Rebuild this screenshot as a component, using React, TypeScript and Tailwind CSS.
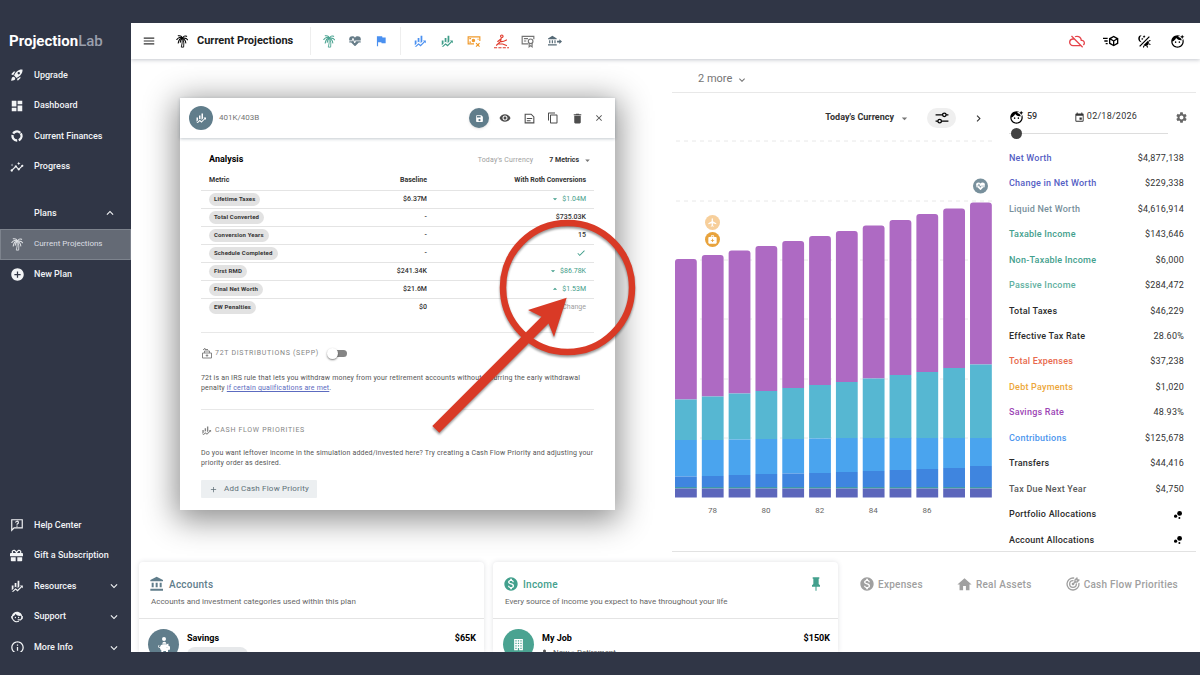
import type { ReactNode } from "react";
import { FaGift, FaPiggyBank } from "react-icons/fa";
import {
  MdAdd,
  MdAddCircle,
  MdArrowDropDown,
  MdArrowDropUp,
  MdBubbleChart,
  MdCheck,
  MdClose,
  MdContentCopy,
  MdDelete,
  MdEvent,
  MdExpandLess,
  MdExpandMore,
  MdChevronRight,
  MdFaceRetouchingNatural,
  MdFlight,
  MdHome,
  MdInfoOutline,
  MdInsights,
  MdMedicalServices,
  MdMonetizationOn,
  MdOutlineCloudOff,
  MdRocketLaunch,
  MdSave,
  MdSettings,
  MdVisibility,
} from "react-icons/md";
import { TbTargetArrow } from "react-icons/tb";

const PATHS = {
  menu: "M3,6H21V8H3V6M3,11H21V13H3V11M3,16H21V18H3V16Z",
  dashboard: "M13,3V9H21V3M13,21H21V11H13M3,21H11V15H3M3,13H11V3H3V13Z",
  finance:
    "M6,16.5L3,19.44V11H6M11,14.66L9.43,13.32L8,14.64V7H11M16,13L13,16V3H16M18.81,12.81L17,11H22V16L20.21,14.21L13,21.36L9.53,18.34L5.75,22H3L9.47,15.66L13,18.64",
  heart:
    "M7.5,4A5.5,5.5 0 0,0 2,9.5C2,10 2.09,10.5 2.22,11H6.3L7.57,7.63C7.87,6.83 9.05,6.75 9.43,7.63L11.5,13L12.09,11.58C12.22,11.25 12.57,11 13,11H21.78C21.91,10.5 22,10 22,9.5A5.5,5.5 0 0,0 16.5,4C14.64,4 13,4.93 12,6.34C11,4.93 9.36,4 7.5,4V4M3,12.5A1,1 0 0,0 2,13.5A1,1 0 0,0 3,14.5H5.44L11,20C12,20.9 12,20.9 13,20L18.56,14.5H21A1,1 0 0,0 22,13.5A1,1 0 0,0 21,12.5H13.4L12.47,14.8C12.07,15.81 10.92,15.67 10.55,14.83L8.5,9.5L7.54,11.83C7.39,12.21 7.05,12.5 6.6,12.5H3Z",
  flag: "M14.4,6L14,4H5V21H7V14H12.6L13,16H20V6H14.4Z",
  agent:
    "M18.72,14.76C19.07,13.91 19.26,13 19.26,12C19.26,11.28 19.15,10.59 18.96,9.95C18.31,10.1 17.63,10.18 16.92,10.18C13.86,10.18 11.15,8.67 9.5,6.34C8.61,8.5 6.91,10.26 4.77,11.22C4.73,11.47 4.73,11.74 4.73,12A7.27,7.27 0 0,0 12,19.27C13.05,19.27 14.06,19.04 14.97,18.63C15.54,19.72 15.8,20.26 15.78,20.26C14.14,20.81 12.87,21.08 12,21.08C9.58,21.08 7.27,20.13 5.57,18.42C4.53,17.38 3.76,16.11 3.33,14.73H2V10.18H3.09C3.93,6.04 7.6,2.92 12,2.92C14.4,2.92 16.71,3.87 18.42,5.58C19.69,6.84 20.54,8.45 20.89,10.18H22V14.67H22V14.69L22,14.73H21.94L18.38,18L13.08,17.4V15.73H17.91L18.72,14.76M9.27,11.77C9.57,11.77 9.86,11.89 10.07,12.11C10.28,12.32 10.4,12.61 10.4,12.91C10.4,13.21 10.28,13.5 10.07,13.71C9.86,13.92 9.57,14.04 9.27,14.04C8.64,14.04 8.13,13.54 8.13,12.91C8.13,12.28 8.64,11.77 9.27,11.77M14.72,11.77C15.35,11.77 15.85,12.28 15.85,12.91C15.85,13.54 15.35,14.04 14.72,14.04C14.09,14.04 13.58,13.54 13.58,12.91A1.14,1.14 0 0,1 14.72,11.77Z",
  bank: "M11.5,1L2,6V8H21V6M16,10V17H19V10M2,22H21V19H2M10,10V17H13V10M4,10V17H7V10H4Z",
  pin: "M16,12V4H17V2H7V4H8V12L6,14V16H11.2V22H12.8V16H18V14L16,12Z",
  cube: "M16,4L9,8.04V15.96L16,20L23,15.96V8.04M16,6.31L19.8,8.5L16,10.69L12.21,8.5M0,7V9H7V7M11,10.11L15,12.42V17.11L11,14.81M21,10.11V14.81L17,17.11V12.42M2,11V13H7V11M4,15V17H7V15",
  theme:
    "M7.5,2C5.71,3.15 4.5,5.18 4.5,7.5C4.5,9.82 5.71,11.85 7.53,13C4.46,13 2,10.54 2,7.5A5.5,5.5 0 0,1 7.5,2M19.07,3.5L20.5,4.93L4.93,20.5L3.5,19.07L19.07,3.5M12.89,5.93L11.41,5L9.97,6L10.39,4.3L9,3.24L10.75,3.12L11.33,1.47L12,3.1L13.73,3.13L12.38,4.26L12.89,5.93M9.59,9.54L8.43,8.81L7.31,9.59L7.65,8.27L6.56,7.44L7.92,7.35L8.37,6.06L8.88,7.33L10.24,7.36L9.19,8.23L9.59,9.54M19,13.5A5.5,5.5 0 0,1 13.5,19C12.28,19 11.15,18.6 10.24,17.93L17.93,10.24C18.6,11.15 19,12.28 19,13.5M14.6,20.08L17.37,18.93L17.13,22.28L14.6,20.08M18.93,17.38L20.08,14.61L22.28,17.15L18.93,17.38M20.08,12.42L18.94,9.64L22.28,9.88L20.08,12.42M9.63,18.93L12.4,20.08L9.87,22.27L9.63,18.93Z",
  building:
    "M5,3V21H11V17.5H13V21H19V3H5M7,5H9V7H7V5M11,5H13V7H11V5M15,5H17V7H15V5M7,9H9V11H7V9M11,9H13V11H11V9M15,9H17V11H15V9M7,13H9V15H7V13M11,13H13V15H11V13M15,13H17V15H15V13M7,17H9V19H7V17M15,17H17V19H15V17Z",
};

function Icon({ d, size = 14 }: { d: string; size?: number }) {
  return (
    <svg width={size} height={size} viewBox="0 0 24 24" fill="currentColor" fillRule="evenodd" aria-hidden="true">
      <path d={d} />
    </svg>
  );
}

function Line({ children, size = 14, w = 2 }: { children: ReactNode; size?: number; w?: number }) {
  return (
    <svg width={size} height={size} viewBox="0 0 24 24" fill="none" stroke="currentColor" strokeWidth={w} aria-hidden="true">
      {children}
    </svg>
  );
}

const Palm = () => (
  <Line w={1.8}>
    <path
      d="M12.500 7.500Q8 3.500 3 9.500M12.500 7.500Q7 7 5.500 15.500M12.500 7.500Q11.500 2 5.500 3M12.500 7.500Q15.500 1.500 20 4M12.500 7.500Q19 6 21.500 10M13 8Q18 9 18.500 15.500M12.500 8Q9 10 9 14"
      strokeLinecap="round"
    />
    <path d="M12.200 8.500Q13 15 10.800 22.500H14.800Q16 15 13.800 9" strokeWidth="1.500" />
  </Line>
);

const Donut = () => (
  <Line w={4}>
    <circle cx="12" cy="12" r="7.700" strokeDasharray="13.600 2.526" transform="rotate(-35 12 12)" />
  </Line>
);

const HelpBubble = () => (
  <Line>
    <path d="M3 21V3H21V17H7Z" />
    <path d="M9.800 8A2.300 2.300 0 1 1 12.800 10Q12 10.400 12 11.600M12 13V15" />
  </Line>
);

const CashRemove = () => (
  <Line>
    <path d="M12 17H2V5H22V12" />
    <circle cx="11" cy="11" r="2" fill="currentColor" />
    <path d="M5 9V8H7M19 8V10M5 13V14H7M15.500 15.500L21.500 21.500M21.500 15.500L15.500 21.500" />
  </Line>
);

const Swimmer = () => (
  <Line size={15} w={1.8}>
    <circle cx="12.500" cy="3.500" r="2" />
    <path d="M11.500 7L10.500 12L4 18M11 8L6 12M10.500 12Q14 13 20 9.500M8 16H14L20 18.500" strokeLinecap="round" />
    <path d="M0 22H24" strokeDasharray="5 2" />
  </Line>
);

const Certificate = () => (
  <Line>
    <path d="M12 17H2V4H22V9M5 8H12M5 12H9" />
    <circle cx="16.500" cy="12.500" r="4" />
    <path d="M14 16V22L16.500 20L19 22V16" />
  </Line>
);

const BankTransfer = () => (
  <svg width="14" height="14" viewBox="0 0 24 24" fill="currentColor" aria-hidden="true">
    <path d="M7.500 3L0 7.500V9H15V7.500ZM2 10.500H4V16H2ZM6.500 10.500H8.500V16H6.500ZM11 10.500H13V16H11ZM0 17.500H15V19.500H0ZM19.500 9L24 13L19.500 17V14.500H15.500V11.500H19.500Z" />
  </svg>
);

const Note = () => (
  <Line size={13}>
    <path d="M4 4H15L20 9V20H4ZM7 12H17M7 16H14" />
  </Line>
);

const Tune = () => (
  <Line size={14} w={2.2}>
    <circle cx="16" cy="6.500" r="3" />
    <circle cx="8" cy="17.500" r="3" />
    <path d="M1 6.500H13M19 6.500H23M1 17.500H5M11 17.500H23" />
  </Line>
);

const Withdraw = () => (
  <Line size={12}>
    <path d="M3 12H21V22H3ZM7 12V8H17V12M4 6L8 2.500V5H14M12 14.500V19.500M9.500 17H14.500" />
  </Line>
);

function NavItem({ icon, label, chevron, active }: { icon?: ReactNode; label: string; chevron?: "up" | "down"; active?: boolean }) {
  return (
    <a
      href="#"
      aria-current={active ? "page" : undefined}
      className={
        active
          ? "flex h-[31px] items-center border border-[#7d838d] bg-[#646a75] pl-[9px] pr-2.5 text-[8px] font-normal text-[#dcdfe3]"
          : "flex h-full items-center pl-2.5 pr-2.5 text-[#f2f4f6]"
      }
    >
      <span className="flex w-6 items-center">{icon}</span>
      <span className="flex-1 whitespace-nowrap">{label}</span>
      {chevron === "up" && <MdExpandLess size={14} className="mr-1" />}
      {chevron === "down" && <MdExpandMore size={14} />}
    </a>
  );
}

function Sidebar() {
  return (
    <aside className="flex w-[131px] shrink-0 flex-col overflow-hidden text-[9px] font-medium">
      <div className="flex h-9 shrink-0 items-center pl-[9px] text-[15px] font-bold text-white">
        Projection<span className="font-medium text-[#9a9fac]">Lab</span>
      </div>
      <nav className="mt-px grid h-[122px] shrink-0 grid-rows-4">
        <NavItem icon={<MdRocketLaunch size={14} />} label="Upgrade" />
        <NavItem icon={<Icon d={PATHS.dashboard} />} label="Dashboard" />
        <NavItem icon={<Donut />} label="Current Finances" />
        <NavItem icon={<MdInsights size={14} />} label="Progress" />
      </nav>
      <nav className="mt-4 grid h-[92px] shrink-0 grid-rows-3">
        <NavItem label="Plans" chevron="up" />
        <NavItem icon={<Palm />} label="Current Projections" active />
        <NavItem icon={<MdAddCircle size={15} />} label="New Plan" />
      </nav>
      <nav className="-mb-[11px] mt-auto grid h-[153px] shrink-0 grid-rows-5">
        <NavItem icon={<HelpBubble />} label="Help Center" />
        <NavItem icon={<FaGift size={13} />} label="Gift a Subscription" />
        <NavItem icon={<Icon d={PATHS.finance} />} label="Resources" chevron="down" />
        <NavItem icon={<Icon d={PATHS.agent} />} label="Support" chevron="down" />
        <NavItem icon={<MdInfoOutline size={15} />} label="More Info" chevron="down" />
      </nav>
    </aside>
  );
}

function Tool({ label, className, children }: { label: string; className: string; children: ReactNode }) {
  return (
    <button type="button" aria-label={label} className={className}>
      {children}
    </button>
  );
}

function TopBar() {
  const cell = "flex w-[26px] justify-center ";
  return (
    <header className="relative z-10 flex h-9 shrink-0 items-center bg-white pl-[11px] pr-[15px] shadow-[0_1px_4px_rgba(60,70,90,0.3)]">
      <Tool label="Menu" className="text-[#333333]">
        <Icon d={PATHS.menu} />
      </Tool>
      <span className="ml-[19px] text-black">
        <Palm />
      </span>
      <h1 className="ml-2 whitespace-nowrap text-[11px] font-bold text-[#1c1c1c]">Current Projections</h1>
      <div className="ml-[17px] flex h-7 items-center border-l border-[#eeeeee] pl-[5px]">
        <Tool label="Retirement" className={cell + "text-[#4aa391]"}><Palm /></Tool>
        <Tool label="Life expectancy" className={cell + "text-[#667c88]"}><Icon d={PATHS.heart} /></Tool>
        <Tool label="Milestones" className={cell + "text-[#4a90f0]"}><Icon d={PATHS.flag} /></Tool>
      </div>
      <div className="ml-1.5 flex h-7 items-center gap-px border-l border-[#eeeeee] pl-1.5">
        <Tool label="Growth" className={cell + "text-[#4a90f0]"}><Icon d={PATHS.finance} /></Tool>
        <Tool label="Returns" className={cell + "text-[#3f9d89]"}><Icon d={PATHS.finance} /></Tool>
        <Tool label="Drawdown" className={cell + "text-[#f09a2c]"}><CashRemove /></Tool>
        <Tool label="Inflation" className={cell + "text-[#e0392b]"}><Swimmer /></Tool>
        <Tool label="Taxes" className={cell + "text-[#757575]"}><Certificate /></Tool>
        <Tool label="Transfers" className={cell + "text-[#566a76]"}><BankTransfer /></Tool>
      </div>
      <div className="ml-auto flex items-center gap-[18px] text-black">
        <Tool label="Offline" className="text-[#e5444b]"><MdOutlineCloudOff size={16} /></Tool>
        <Tool label="Send" className=""><Icon d={PATHS.cube} size={16} /></Tool>
        <Tool label="Theme" className=""><Icon d={PATHS.theme} size={15} /></Tool>
        <Tool label="Profile" className=""><MdFaceRetouchingNatural size={15} /></Tool>
      </div>
    </header>
  );
}

type Metric = { name: string; base: string; value: ReactNode };
const METRICS: Metric[] = [
  { name: "Lifetime Taxes", base: "$6.37M", value: <Delta down text="$1.04M" /> },
  { name: "Total Converted", base: "-", value: "$735.03K" },
  { name: "Conversion Years", base: "-", value: "15" },
  { name: "Schedule Completed", base: "-", value: <MdCheck size={10} className="ml-auto text-[#3f9d89]" aria-label="Yes" /> },
  { name: "First RMD", base: "$241.34K", value: <Delta down text="$86.78K" /> },
  { name: "Final Net Worth", base: "$21.6M", value: <Delta text="$1.53M" /> },
  { name: "EW Penalties", base: "$0", value: <span className="font-normal text-[#9e9e9e]">No Change</span> },
];

function Delta({ down, text }: { down?: boolean; text: string }) {
  return (
    <span className="flex items-center justify-end gap-0.5 font-normal text-[#3f9d89]">
      {down ? <MdArrowDropDown size={10} /> : <MdArrowDropUp size={10} />}
      {text}
    </span>
  );
}

function AccountDialog() {
  return (
    <section
      role="dialog"
      aria-label="401K/403B"
      className="relative z-20 w-[435px] bg-white text-[7px] text-[#555555] shadow-[0_6px_30px_4px_rgba(0,0,0,0.45)]"
    >
      <div className="flex h-10 items-center pl-[9px] pr-[11px] shadow-[0_1px_3px_rgba(60,80,100,0.3)]">
        <span className="flex size-6 items-center justify-center rounded-full bg-[#607d8b] text-white">
          <Icon d={PATHS.finance} size={12} />
        </span>
        <span className="ml-1.5 text-[8px] text-[#757575]">401K/403B</span>
        <div className="ml-auto flex items-center text-[#4d4d4d]">
          <Tool label="Save" className="flex size-5 items-center justify-center rounded-full bg-[#607d8b] text-white shadow-sm">
            <MdSave size={9} />
          </Tool>
          <Tool label="Preview" className="ml-2.5"><MdVisibility size={12} /></Tool>
          <Tool label="Notes" className="ml-3"><Note /></Tool>
          <Tool label="Copy" className="ml-[11px]"><MdContentCopy size={12} /></Tool>
          <Tool label="Delete" className="ml-3"><MdDelete size={13} /></Tool>
          <Tool label="Close" className="ml-2.5"><MdClose size={10} /></Tool>
        </div>
      </div>
      <div className="px-[21px] pb-3 pt-3">
        <div className="flex h-5 items-center pl-2 pr-px">
          <h2 className="text-[9px] font-bold text-black">Analysis</h2>
          <span className="ml-auto tracking-wide text-[#9e9e9e]">Today's Currency</span>
          <button type="button" className="ml-4 flex items-center gap-[3px] font-bold text-[#333333]">
            7 Metrics <MdArrowDropDown size={11} className="text-[#777777]" />
          </button>
        </div>
        <table className="w-full font-medium text-[#333333]">
          <thead>
            <tr className="h-5 font-bold">
              <th className="pl-2 text-left">Metric</th>
              <th className="text-right">Baseline</th>
              <th className="w-[167px] pr-2 text-right">With Roth Conversions</th>
            </tr>
          </thead>
          <tbody>
            {METRICS.map((m) => (
              <tr key={m.name} className="h-[18px] border-t border-[#e4e4e4]">
                <td className="pl-2">
                  <span className="flex h-[13px] w-fit items-center rounded-full bg-[#e2e2e2] px-[5px] text-[6px] font-bold leading-none tracking-wide">{m.name}</span>
                </td>
                <td className="text-right">{m.base}</td>
                <td className="pr-2 text-right">{m.value}</td>
              </tr>
            ))}
          </tbody>
        </table>
        <div className="mt-4 border-t border-[#e8e8e8]" />
        <label className="mt-2.5 flex h-5 items-center text-[#858585]">
          <Withdraw />
          <span className="ml-0.5 tracking-widest">72T DISTRIBUTIONS (SEPP)</span>
          <input
            type="checkbox"
            className="relative ml-2.5 h-[7px] w-[18px] appearance-none rounded-full bg-[#858585] before:absolute before:-left-0.5 before:-top-0.5 before:size-[11px] before:rounded-full before:bg-white before:shadow-[0_1px_2px_rgba(0,0,0,0.5)] checked:before:left-[9px]"
          />
        </label>
        <p className="mt-2.5 leading-[10px] tracking-wide">
          72t is an IRS rule that lets you withdraw money from your retirement accounts without incurring the early withdrawal penalty{" "}
          <a href="#" className="text-[#5c6bc0] underline">if certain qualifications are met</a>.
        </p>
        <div className="mt-4 border-t border-[#e8e8e8]" />
        <h3 className="mt-2.5 flex h-5 items-center font-normal text-[#858585]">
          <Icon d={PATHS.finance} size={11} />
          <span className="ml-[3px] tracking-widest">CASH FLOW PRIORITIES</span>
        </h3>
        <p className="mt-2 leading-[10px] tracking-wide">
          Do you want leftover income in the simulation added/invested here? Try creating a Cash Flow Priority and adjusting your priority order as desired.
        </p>
        <button type="button" className="mt-3 flex h-[18px] items-center gap-1.5 rounded-[1px] bg-[#eceff1] px-2 text-[8px] tracking-wide text-[#607078]">
          <MdAdd size={9} /> Add Cash Flow Priority
        </button>
      </div>
      <svg className="pointer-events-none absolute left-0 top-0 drop-shadow-[0_2px_1px_rgba(0,0,0,0.4)]" width="460" height="412" viewBox="180 98 460 412" aria-hidden="true">
        <circle cx="567.500" cy="287.500" r="64.500" fill="none" stroke="#d93a26" strokeWidth="6.500" />
        <path d="M566.700 297.700L528 310L541.500 316.800L432.300 426L439.300 432.700L548.500 323.500L554 337Z" fill="#d93a26" />
      </svg>
    </section>
  );
}

const BARS = [
  [260, 400.5, 441, 477.5],
  [256, 397.5, 441, 477],
  [251.5, 394.5, 440.5, 476],
  [247, 392, 440, 475],
  [242, 389, 440, 474.5],
  [237, 386, 439.5, 474],
  [232, 383, 439, 473],
  [226.5, 379.5, 439, 472],
  [221, 376, 439, 471],
  [215, 373, 439, 470],
  [209.5, 369, 439, 469],
  [203.5, 365.5, 439, 467],
];
const BASE = 498.5;

function Chart() {
  return (
    <svg className="mt-px w-full" viewBox="672 130 328 395" role="img" aria-label="Net worth by age">
      {[142, 202, 261, 320, 380, 439].map((y) => (
        <line key={y} x1="676" x2="993" y1={y} y2={y} stroke="#e8e8e8" strokeDasharray="4 4" />
      ))}
      {BARS.map(([top, teal, blue, dark], i) => {
        const x = 675 + i * 26.82;
        return (
          <g key={i}>
            <path d={`M${x} ${teal}V${top + 3}q0 -3 3 -3h15.800q3 0 3 3V${teal}Z`} fill="#ae6ac3" />
            <rect x={x} y={teal} width="21.800" height={blue - teal} fill="#56b7d2" />
            <rect x={x} y={blue} width="21.800" height={dark - blue} fill="#4aa4ee" />
            <rect x={x} y={dark} width="21.800" height={488 - dark} fill="#3f85df" />
            <rect x={x} y="488" width="21.800" height="1.500" fill="#3d9aa8" />
            <rect x={x} y="489.500" width="21.800" height={BASE - 489.5} fill="#5c66bb" />
          </g>
        );
      })}
      {[78, 80, 82, 84, 86].map((n, i) => (
        <text key={n} x={712.5 + i * 53.6} y="514" textAnchor="middle" fontSize="8" fill="#666666">{n}</text>
      ))}
      <circle cx="712.500" cy="223.500" r="7.500" fill="#f7cf9b" />
      <g color="#ffffff"><MdFlight x={707.5} y={218.5} size={10} /></g>
      <circle cx="712.500" cy="240.500" r="7.500" fill="#e8a33d" />
      <g color="#ffffff"><MdMedicalServices x={707.5} y={235.5} size={10} /></g>
      <circle cx="980.500" cy="187" r="7.500" fill="#78909c" />
      <path transform="translate(975.100 181.700) scale(0.450)" d={PATHS.heart} fill="#ffffff" />
    </svg>
  );
}

const STATS: [string, string, string][] = [
  ["Net Worth", "$4,877,138", "text-[#5560c4]"],
  ["Change in Net Worth", "$229,338", "text-[#5560c4]"],
  ["Liquid Net Worth", "$4,616,914", "text-[#78909c]"],
  ["Taxable Income", "$143,646", "text-[#43a08d]"],
  ["Non-Taxable Income", "$6,000", "text-[#43a08d]"],
  ["Passive Income", "$284,472", "text-[#5fb0a0]"],
  ["Total Taxes", "$46,229", "text-[#2b2b2b]"],
  ["Effective Tax Rate", "28.60%", "text-[#2b2b2b]"],
  ["Total Expenses", "$37,238", "text-[#e8694c]"],
  ["Debt Payments", "$1,020", "text-[#eda73a]"],
  ["Savings Rate", "48.93%", "text-[#9c45b5]"],
  ["Contributions", "$125,678", "text-[#4c96ee]"],
  ["Transfers", "$44,416", "text-[#2b2b2b]"],
  ["Tax Due Next Year", "$4,750", "text-[#5a5a5a]"],
  ["Portfolio Allocations", "", "text-[#2b2b2b]"],
  ["Account Allocations", "", "text-[#2b2b2b]"],
];

function Projection() {
  return (
    <section className="mr-1 flex min-h-0 flex-col border-b border-[#e2e2e2] bg-white">
      <div className="flex h-[34px] shrink-0 items-center border-b border-[#e8e8e8] pl-[26px] pt-2">
        <button type="button" className="flex items-center gap-1 text-[11px] text-[#757575]">
          2 more <MdExpandMore size={12} />
        </button>
      </div>
      <div className="flex min-h-0 flex-1">
        <div className="min-w-0 flex-1 pr-[9px] pt-[15px]">
          <div className="flex h-5 items-center justify-end pr-[15px]">
            <button type="button" className="flex items-center gap-1 text-[9px] font-bold text-[#333333]">
              Today's Currency <MdArrowDropDown size={13} className="text-[#777777]" />
            </button>
            <Tool label="Chart options" className="ml-4 flex h-5 w-[29px] items-center justify-center rounded-full bg-[#efefef] text-black"><Tune /></Tool>
            <Tool label="Next" className="ml-4 text-[#333333]"><MdChevronRight size={13} /></Tool>
          </div>
          <Chart />
        </div>
        <div className="mr-3 flex w-[175px] shrink-0 flex-col pt-4">
          <div className="-mr-1 flex h-4 shrink-0 items-center text-[9px] text-[#333333]">
            <MdFaceRetouchingNatural size={15} className="text-black" />
            <span className="ml-[3px] font-medium">59</span>
            <span className="ml-auto flex items-center gap-0.5 tracking-wide">
              <MdEvent size={11} /> 02/18/2026
            </span>
            <Tool label="Settings" className="ml-[38px] text-[#666666]"><MdSettings size={13} /></Tool>
          </div>
          <input
            type="range"
            aria-label="Age"
            min={59}
            max={100}
            defaultValue={59}
            className="mr-4 mt-[3px] h-[11px] shrink-0 appearance-none bg-transparent [&::-webkit-slider-runnable-track]:h-px [&::-webkit-slider-runnable-track]:bg-[#dddddd] [&::-webkit-slider-thumb]:-mt-[5px] [&::-webkit-slider-thumb]:ml-0.5 [&::-webkit-slider-thumb]:size-[11px] [&::-webkit-slider-thumb]:appearance-none [&::-webkit-slider-thumb]:rounded-full [&::-webkit-slider-thumb]:bg-[#424242]"
          />
          <dl className="-mb-0.5 mt-[7px] flex min-h-0 flex-1 flex-col text-[9px] tracking-wide">
            {STATS.map(([name, value, color]) => (
              <div key={name} className="flex flex-1 items-center justify-between">
                <dt className={"font-medium " + color}>{name}</dt>
                <dd className="text-[#333333]">{value || <MdBubbleChart size={12} className="text-black" />}</dd>
              </div>
            ))}
          </dl>
        </div>
      </div>
    </section>
  );
}

function PlanCard({ icon, title, text, color, pinned, children }: { icon: ReactNode; title: string; text: string; color: string; pinned?: boolean; children: ReactNode }) {
  return (
    <section className="overflow-hidden rounded-t-[4px] bg-white shadow-[0_0_5px_rgba(60,70,90,0.16)]">
      <div className="h-[57px] border-b border-[#e4e4e4] pl-2.5 pr-3 pt-3">
        <div className={"flex h-5 items-center gap-1 " + color}>
          {icon}
          <h2 className="text-[10px] font-medium tracking-wide">{title}</h2>
          {pinned && (
            <Tool label="Unpin" className="ml-auto mr-0.5"><Icon d={PATHS.pin} size={16} /></Tool>
          )}
        </div>
        <p className="ml-0.5 mt-0.5 text-[8px] leading-3 text-[#666666]">{text}</p>
      </div>
      {children}
    </section>
  );
}

export default function App() {
  const tab = "flex h-5 items-center gap-[3px] whitespace-nowrap text-[10px] font-medium tracking-wide text-[#a0a0a0]";
  return (
    <div className="flex h-screen overflow-hidden bg-[#303646] py-[23px] font-[Roboto,sans-serif] leading-normal">
      <Sidebar />
      <div className="flex min-w-0 flex-1 flex-col overflow-hidden bg-white">
        <TopBar />
        <main className="flex min-h-0 flex-1 flex-col">
          <div className="grid min-h-0 flex-1 grid-cols-[541fr_528fr] pb-2.5">
            <div className="pl-[49px] pt-[39px]">
              <AccountDialog />
            </div>
            <div className="relative z-[5] grid min-h-0 bg-white [clip-path:inset(0)]">
              <Projection />
            </div>
          </div>
          <div className="grid h-[90px] shrink-0 grid-cols-3 gap-[9px] px-2">
            <PlanCard icon={<Icon d={PATHS.bank} size={16} />} title="Accounts" text="Accounts and investment categories used within this plan" color="text-[#607d8b]">
              <div className="flex items-start pl-[9px] pr-2 pt-2.5">
                <span className="flex size-[31px] flex-col items-center justify-center rounded-full bg-[#607d8b] text-white">
                  <span className="size-1 rounded-full bg-white" />
                  <FaPiggyBank size={12} />
                </span>
                <div className="ml-2">
                  <h3 className="text-[9px] font-bold leading-[18px] text-black">Savings</h3>
                  <div className="h-4 w-[61px] rounded-full bg-[#e6e8ea]" />
                </div>
                <span className="ml-auto text-[9px] font-bold leading-[18px] text-black">$65K</span>
              </div>
            </PlanCard>
            <PlanCard icon={<MdMonetizationOn size={16} />} title="Income" text="Every source of income you expect to have throughout your life" color="text-[#43a08d]" pinned>
              <div className="flex items-start pl-2.5 pr-2 pt-2.5">
                <span className="flex size-[31px] items-center justify-center rounded-full bg-[#4aa391] text-white">
                  <Icon d={PATHS.building} size={15} />
                </span>
                <div className="ml-2">
                  <h3 className="text-[9px] font-bold leading-[18px] text-black">My Job</h3>
                  <p className="flex items-center gap-1 text-[8px] leading-3 text-[#555555]">
                    <svg width="7" height="9" viewBox="0 0 7 9" fill="currentColor" aria-hidden="true">
                      <circle cx="2.500" cy="2" r="1.500" />
                      <path d="M1 4H4V9H1ZM5 5H7V9H5Z" />
                    </svg>
                    Now » Retirement
                  </p>
                </div>
                <span className="ml-auto text-[9px] font-bold leading-[18px] text-black">$150K</span>
              </div>
            </PlanCard>
            <nav className="flex items-start justify-between pl-3 pr-3.5 pt-3">
              <a href="#" className={tab}><MdMonetizationOn size={16} />Expenses</a>
              <a href="#" className={tab}><MdHome size={17} />Real Assets</a>
              <a href="#" className={tab}><TbTargetArrow size={16} />Cash Flow Priorities</a>
            </nav>
          </div>
        </main>
      </div>
    </div>
  );
}
